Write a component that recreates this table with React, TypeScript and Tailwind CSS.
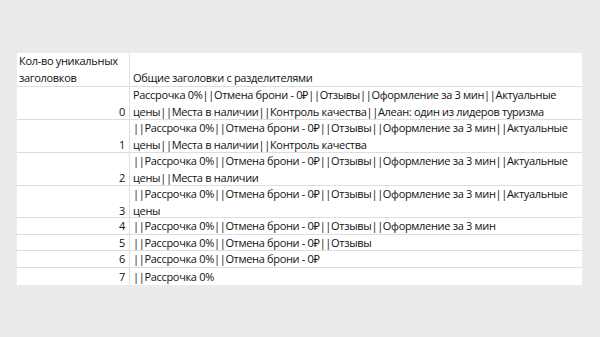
import React from "react";

type Row = { n?: string; lines: string[]; h: string };

const rows: Row[] = [
  {
    n: "0",
    h: "h-[33px]",
    lines: [
      "Рассрочка 0%||Отмена брони - 0₽||Отзывы||Оформление за 3 мин||Актуальные",
      "цены||Места в наличии||Контроль качества||Алеан: один из лидеров туризма",
    ],
  },
  {
    n: "1",
    h: "h-[33px]",
    lines: [
      "||Рассрочка 0%||Отмена брони - 0₽||Отзывы||Оформление за 3 мин||Актуальные",
      "цены||Места в наличии||Контроль качества",
    ],
  },
  {
    n: "2",
    h: "h-[33px]",
    lines: [
      "||Рассрочка 0%||Отмена брони - 0₽||Отзывы||Оформление за 3 мин||Актуальные",
      "цены||Места в наличии",
    ],
  },
  {
    n: "3",
    h: "h-[32px]",
    lines: ["||Рассрочка 0%||Отмена брони - 0₽||Отзывы||Оформление за 3 мин||Актуальные", "цены"],
  },
  { n: "4", h: "h-[17px]", lines: ["||Рассрочка 0%||Отмена брони - 0₽||Отзывы||Оформление за 3 мин"] },
  { n: "5", h: "h-[16px]", lines: ["||Рассрочка 0%||Отмена брони - 0₽||Отзывы"] },
  { n: "6", h: "h-[17px]", lines: ["||Рассрочка 0%||Отмена брони - 0₽"] },
  { n: "7", h: "h-[17px]", lines: ["||Рассрочка 0%"] },
];

export default function App() {
  return (
    <div
      className="w-[600px] h-[337px] bg-[#ebebeb] pt-[53px] pl-[17px] text-[#111111] text-[11px] leading-[16.5px] tracking-[-0.32px]"
      style={{ fontFamily: '"Open Sans", "Noto Sans", sans-serif' }}
    >
      <div className="w-[565px] bg-white">
        <div className="grid grid-cols-[113px_1fr] h-[34px] border-b border-[#dedede]">
          <div className="border-r border-[#dedede] pl-[2px] flex flex-col justify-end pb-[1px] whitespace-nowrap">
            <span>Кол-во уникальных</span>
            <span>заголовков</span>
          </div>
          <div className="flex flex-col justify-end pl-[3px] pb-[1px] whitespace-nowrap">
            <span>Общие заголовки с разделителями</span>
          </div>
        </div>
        {rows.map((r, i) => (
          <div
            key={i}
            className={`grid grid-cols-[113px_1fr] ${r.h} ${i < rows.length - 1 ? "border-b border-[#dedede]" : ""}`}
          >
            <div className="border-r border-[#dedede] flex flex-col justify-end items-end pr-[4px]">
              <span>{r.n}</span>
            </div>
            <div className="flex flex-col justify-end pl-[3px] whitespace-nowrap">
              {r.lines.map((l, j) => (
                <span key={j}>{l}</span>
              ))}
            </div>
          </div>
        ))}
      </div>
    </div>
  );
}
